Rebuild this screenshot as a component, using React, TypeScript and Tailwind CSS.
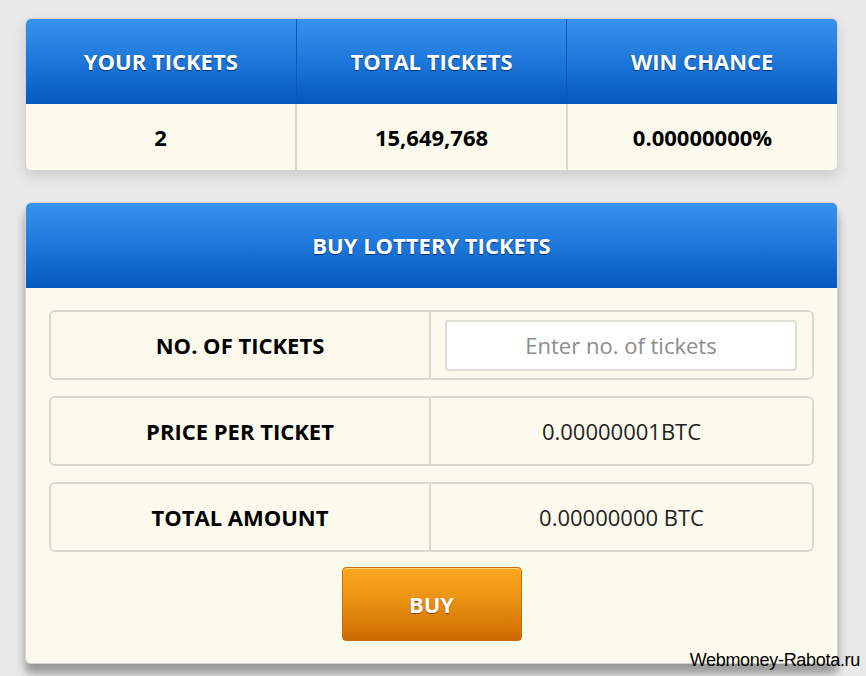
import React from "react";

const stats = [
  { label: "YOUR TICKETS", value: "2" },
  { label: "TOTAL TICKETS", value: "15,649,768" },
  { label: "WIN CHANCE", value: "0.00000000%" },
];

const headerBg =
  "bg-[linear-gradient(to_bottom,#3893ee_0%,#1a74d8_55%,#0459bd_100%)]";
const headText = "text-white font-bold text-[22px] [text-shadow:0_1px_1px_rgba(0,30,80,0.75)]";

function Row({ label, children }: { label: string; children: React.ReactNode }) {
  return (
    <div className="flex h-[70px] rounded-[6px] border-2 border-[#dcdad0]">
      <div className="w-[380px] flex items-center justify-center border-r-2 border-[#dcdad0] font-bold text-[22px] text-black">
        {label}
      </div>
      <div className="flex-1 flex items-center justify-center text-[22px] text-[#222]">
        {children}
      </div>
    </div>
  );
}

export default function App() {
  return (
    <div
      className="relative w-[866px] h-[676px] overflow-hidden bg-[#e9e9e9] pl-[25px] pt-[18px]"
      style={{ fontFamily: '"Open Sans", "Noto Sans", sans-serif' }}
    >
      {/* ticket stats */}
      <div className="w-[813px] rounded-[6px] overflow-hidden bg-[#fcfaec] border border-[#d4d4d0] shadow-[0_6px_14px_rgba(0,0,0,0.12)]">
        <div className={`flex h-[85px] ${headerBg}`}>
          {stats.map((s, i) => (
            <div
              key={s.label}
              className={`flex-1 flex items-center justify-center ${headText} ${
                i < 2 ? "border-r border-[#0c58ad]" : ""
              }`}
            >
              {s.label}
            </div>
          ))}
        </div>
        <div className="flex h-[66px]">
          {stats.map((s, i) => (
            <div
              key={s.label}
              className={`flex-1 flex items-center justify-center font-bold text-[22px] text-black ${
                i < 2 ? "border-r-2 border-[#dcdad0]" : ""
              }`}
            >
              {s.value}
            </div>
          ))}
        </div>
      </div>

      {/* purchase form */}
      <div className="mt-[31px] w-[813px] h-[462px] rounded-[6px] overflow-hidden bg-[#fcfaec] border border-[#d4d4d0] shadow-[0_10px_10px_rgba(0,0,0,0.35)]">
        <div className={`flex h-[85px] items-center justify-center ${headerBg} ${headText}`}>
          BUY LOTTERY TICKETS
        </div>
        <div className="px-[23px] pt-[22px] flex flex-col gap-[16px]">
          <Row label="NO. OF TICKETS">
            <input
              placeholder="Enter no. of tickets"
              className="w-[352px] h-[51px] ml-[-1px] rounded-[4px] border-2 border-[#dedcd6] bg-white text-center text-[22px] text-[#333] placeholder:text-[#8c8c8c] outline-none"
            />
          </Row>
          <Row label="PRICE PER TICKET">0.00000001BTC</Row>
          <Row label="TOTAL AMOUNT">0.00000000 BTC</Row>
        </div>
        <div className="flex justify-center mt-[15px]">
          <button className="w-[180px] h-[74px] rounded-[4px] border border-[#c86f08] bg-[linear-gradient(to_bottom,#fea820_0%,#e88f10_50%,#cb6a00_100%)] shadow-[inset_0_1px_0_rgba(255,220,150,0.8)] text-white font-bold text-[22px] [text-shadow:0_1px_1px_rgba(120,50,0,0.8)]">
            BUY
          </button>
        </div>
      </div>

      <div
        className="absolute right-[6px] bottom-[7px] text-[18px] leading-none text-black tracking-[-0.3px]"
        style={{ fontFamily: '"Liberation Sans Narrow", "Liberation Sans", Arial, sans-serif' }}
      >
        Webmoney-Rabota.ru
      </div>
    </div>
  );
}
